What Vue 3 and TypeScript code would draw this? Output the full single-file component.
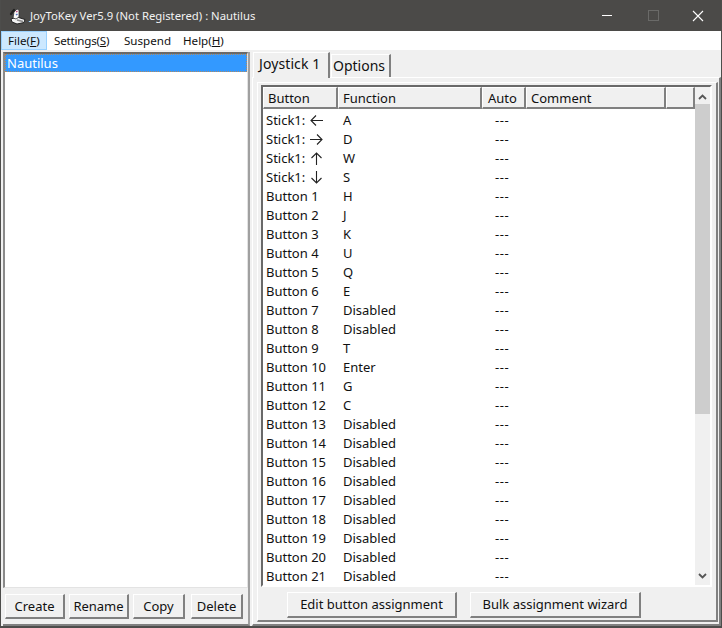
<script setup lang="ts">
type Row = { button: string; arrow?: 'left' | 'right' | 'up' | 'down'; fn: string }

const arrowPaths: Record<string, string> = {
  left: 'M13 6.5H1M6 1.5L1 6.5L6 11.5',
  right: 'M0 6.5H12M7 1.5L12 6.5L7 11.5',
  up: 'M6.5 13V1M1.5 6L6.5 1L11.5 6',
  down: 'M6.5 0V12M1.5 7L6.5 12L11.5 7',
}

const functions = ['H', 'J', 'K', 'U', 'Q', 'E', 'Disabled', 'Disabled', 'T', 'Enter', 'G', 'C']

const rows: Row[] = [
  { button: 'Stick1:', arrow: 'left', fn: 'A' },
  { button: 'Stick1:', arrow: 'right', fn: 'D' },
  { button: 'Stick1:', arrow: 'up', fn: 'W' },
  { button: 'Stick1:', arrow: 'down', fn: 'S' },
]
for (let i = 1; i <= 21; i++) {
  rows.push({ button: `Button ${i}`, fn: functions[i - 1] ?? 'Disabled' })
}

const columns = [
  { label: 'Button', cls: 'c-button' },
  { label: 'Function', cls: 'c-function' },
  { label: 'Auto', cls: 'c-auto' },
  { label: 'Comment', cls: 'c-comment' },
  { label: '', cls: 'c-rest' },
]
</script>

<template>
  <div class="window">
    <header class="titlebar">
      <svg class="app-icon" width="18" height="18" viewBox="0 0 18 18">
        <path d="M3 12L9 10L17 12.500L16 15.500L9 17L4 15Z" fill="#f2f2f2" stroke="#222" stroke-width="1" />
        <path d="M9 13L15 14.500" stroke="#8a8a8a" stroke-width="1.500" />
        <path d="M5 11L6 5L9 2L11 3L11 10L8 12Z" fill="#fafafa" stroke="#333" stroke-width="0.800" />
        <path d="M3 7L6 3" stroke="#222" stroke-width="2.200" stroke-linecap="round" />
        <path d="M8 5L9.500 4" stroke="#c05080" stroke-width="1.500" />
        <path d="M8 8L9.500 7" stroke="#5070c0" stroke-width="1.500" />
      </svg>
      <span class="title">JoyToKey Ver5.9 (Not Registered) : Nautilus</span>
      <div class="caption">
        <span class="cap-btn"><i class="min"></i></span>
        <span class="cap-btn"><i class="max"></i></span>
        <span class="cap-btn close">
          <svg width="12" height="12" viewBox="0 0 12 12"><path d="M1 1L11 11M11 1L1 11" stroke="#fff" stroke-width="1.100" /></svg>
        </span>
      </div>
    </header>

    <nav class="menu">
      <span class="menu-item m-file active">File(<u>F</u>)</span>
      <span class="menu-item m-settings">Settings(<u>S</u>)</span>
      <span class="menu-item m-suspend">Suspend</span>
      <span class="menu-item m-help">Help(<u>H</u>)</span>
    </nav>

    <div class="body">
      <aside class="left">
        <div class="profiles">
          <div class="profile selected">Nautilus</div>
        </div>
        <div class="left-buttons">
          <button class="btn b-create">Create</button>
          <button class="btn b-rename">Rename</button>
          <button class="btn b-copy">Copy</button>
          <button class="btn b-delete">Delete</button>
        </div>
      </aside>

      <main class="right">
        <div class="tabs">
          <span class="tab current">Joystick 1</span>
          <span class="tab options">Options</span>
        </div>
        <div class="tab-page">
          <div class="panel">
            <div class="list">
              <div class="list-main">
                <div class="head">
                  <div v-for="c in columns" :key="c.cls" class="head-cell" :class="c.cls">{{ c.label }}</div>
                </div>
                <div class="rows">
                  <div v-for="(r, i) in rows" :key="i" class="row">
                    <span class="cell-button">{{ r.button }}<svg v-if="r.arrow" class="arrow" width="13" height="13" viewBox="0 0 13 13">
                        <path :d="arrowPaths[r.arrow]" fill="none" stroke="#222" stroke-width="1.100" />
                      </svg></span>
                    <span class="cell-fn">{{ r.fn }}</span>
                    <span class="cell-auto">---</span>
                  </div>
                </div>
              </div>
              <div class="scrollbar">
                <svg class="sb-arrow" width="9" height="6" viewBox="0 0 9 6"><path d="M1 5L4.500 1.500L8 5" fill="none" stroke="#555" stroke-width="1.800" /></svg>
                <div class="thumb"></div>
                <svg class="sb-arrow bottom" width="9" height="6" viewBox="0 0 9 6"><path d="M1 1L4.500 4.500L8 1" fill="none" stroke="#555" stroke-width="1.800" /></svg>
              </div>
            </div>
            <div class="actions">
              <button class="btn b-edit">Edit button assignment</button>
              <button class="btn b-bulk">Bulk assignment wizard</button>
            </div>
          </div>
        </div>
      </main>
    </div>
  </div>
</template>

<style>
html, body { margin: 0; background: #f0f0f0; overflow: hidden; }
</style>

<style scoped>
.window {
  width: 722px;
  height: 628px;
  box-sizing: border-box;
  display: flex;
  flex-direction: column;
  background: #f0f0f0;
  border-left: 1px solid #4d4d4b;
  border-right: 1px solid #4d4d4b;
  border-bottom: 2px solid #4d4d4b;
  font-family: "Noto Sans", sans-serif;
  font-size: 13px;
  color: #111;
  overflow: hidden;
}

.titlebar {
  height: 31px;
  flex: none;
  margin: 0 -1px;
  background: #4b4a48;
  display: flex;
  align-items: center;
  color: #fff;
  padding-left: 8px;
}

.app-icon { margin-right: 4px; flex: none; }
.title { color: #f2f2f2; font-size: 11.300px; }

.caption { margin-left: auto; display: flex; }
.cap-btn {
  width: 46px;
  height: 31px;
  display: flex;
  align-items: center;
  justify-content: center;
}
.cap-btn .min { width: 10px; height: 1px; background: #fff; display: block; }
.cap-btn .max { width: 9px; height: 9px; border: 1px solid #6a6a68; display: block; }
.cap-btn.close svg { margin-right: 2px; }

.menu {
  height: 19px;
  flex: none;
  background: #fff;
  display: flex;
  font-size: 11.600px;
}
.menu-item {
  padding-left: 7px;
  box-sizing: border-box;
  border: 1px solid transparent;
  border-left: 0;
  line-height: 17px;
}
.menu-item.active {
  background: #cce8ff;
  border: 1px solid #99d1ff;
  padding-left: 6px;
}
.m-file { width: 46px; }
.m-settings { width: 70px; letter-spacing: -0.2px; }
.m-suspend { width: 59px; }
.m-help { width: 60px; }

.body {
  flex: 1;
  min-height: 0;
  display: flex;
  padding: 2px 0 0 2px;
  gap: 2px;
}

.left {
  width: 247px;
  flex: none;
  display: flex;
  flex-direction: column;
  border-right: 2px solid #a0a0a0;
  border-bottom: 2px solid #808080;
  box-sizing: border-box;
}

.profiles {
  flex: 1;
  background: #fff;
  border: 1px solid #e3e3e3;
  border-top: 2px solid #696969;
  border-left: 2px solid #8a8a8a;
}
.profile { height: 18px; line-height: 18px; padding-left: 2px; margin-top: 0; }
.profile.selected {
  background: #3399ff;
  color: #fff;
  outline: 1px dotted #b08a60;
  outline-offset: -1px;
}

.left-buttons {
  display: flex;
  padding: 6px 0 5px 2px;
  gap: 4px;
}

.btn {
  font: inherit;
  color: #111;
  background: #f0f0f0;
  height: 25px;
  padding: 0;
  border: 0;
  border-top: 1px solid #fff;
  border-left: 1px solid #fff;
  border-right: 2px solid #808080;
  border-bottom: 2px solid #808080;
  box-sizing: border-box;
  display: block;
  flex: none;
}
.b-create { width: 60px; }
.b-rename { width: 60px; }
.b-copy { width: 52px; }
.b-delete { width: 52px; margin-left: 2px; }
.b-edit { width: 170px; height: 26px; padding-bottom: 2px; }
.b-bulk { width: 171px; height: 26px; padding-bottom: 2px; }

.right {
  flex: 1;
  min-width: 0;
  display: flex;
  flex-direction: column;
}

.tabs {
  display: flex;
  height: 25px;
  flex: none;
  align-items: flex-end;
  padding-left: 1px;
  gap: 1px;
  position: relative;
  z-index: 1;
}
.tab {
  box-sizing: border-box;
  border-top: 1px solid #fff;
  border-left: 1px solid #fff;
  border-right: 2px solid #808080;
  background: #f0f0f0;
  font-size: 14px;
}
.tab.current {
  width: 77px;
  height: 26px;
  margin-bottom: -1px;
  line-height: 22px;
  padding-left: 5px;
  letter-spacing: 0.1px;
}
.tab.options {
  width: 60px;
  height: 23px;
  line-height: 22px;
  padding-left: 1px;
}

.tab-page {
  flex: 1;
  min-height: 0;
  box-sizing: border-box;
  border-top: 1px solid #fff;
  border-left: 1px solid #fff;
  border-right: 2px solid #808080;
  border-bottom: 2px solid #808080;
  padding: 4px 1px 2px 4px;
  display: flex;
}

.panel {
  flex: 1;
  min-width: 0;
  box-sizing: border-box;
  border-top: 1px solid #fff;
  border-left: 1px solid #fff;
  border-right: 2px solid #808080;
  border-bottom: 2px solid #808080;
  padding: 2px 4px 0 3px;
  display: flex;
  flex-direction: column;
}

.list {
  flex: 1;
  min-height: 0;
  display: flex;
  background: #fff;
  border-top: 2px solid #696969;
  border-left: 2px solid #696969;
  border-right: 2px solid #fff;
  border-bottom: 2px solid #fff;
  overflow: hidden;
}

.list-main { flex: 1; min-width: 0; display: flex; flex-direction: column; }

.head { display: flex; height: 22px; flex: none; }
.head-cell {
  box-sizing: border-box;
  background: #f0f0f0;
  border-top: 1px solid #fff;
  border-left: 1px solid #fff;
  border-right: 2px solid #808080;
  border-bottom: 2px solid #808080;
  line-height: 20px;
  padding-left: 4px;
}
.c-button { width: 75px; }
.c-function { width: 144px; }
.c-auto { width: 44px; padding-left: 5px; }
.c-comment { width: 140px; }
.c-rest { flex: 1; }

.rows { flex: 1; overflow: hidden; padding-top: 2px; }
.row { height: 19px; display: flex; line-height: 19px; }
.cell-button { width: 75px; padding-left: 3px; box-sizing: border-box; display: flex; align-items: center; white-space: pre; flex: none; }
.arrow { margin-left: 5px; flex: none; }
.cell-fn { width: 146px; padding-left: 5px; box-sizing: border-box; flex: none; }
.cell-auto { padding-left: 11px; letter-spacing: 0.6px; }

.scrollbar {
  width: 15px;
  flex: none;
  background: #f0f0f0;
  display: flex;
  flex-direction: column;
  align-items: center;
}
.sb-arrow { margin-top: 7px; flex: none; }
.sb-arrow.bottom { margin-top: auto; margin-bottom: 6px; }
.thumb { width: 15px; height: 310px; background: #cdcdcd; margin-top: 4px; flex: none; }

.actions {
  display: flex;
  gap: 13px;
  padding: 5px 0 2px 26px;
  flex: none;
}
</style>
